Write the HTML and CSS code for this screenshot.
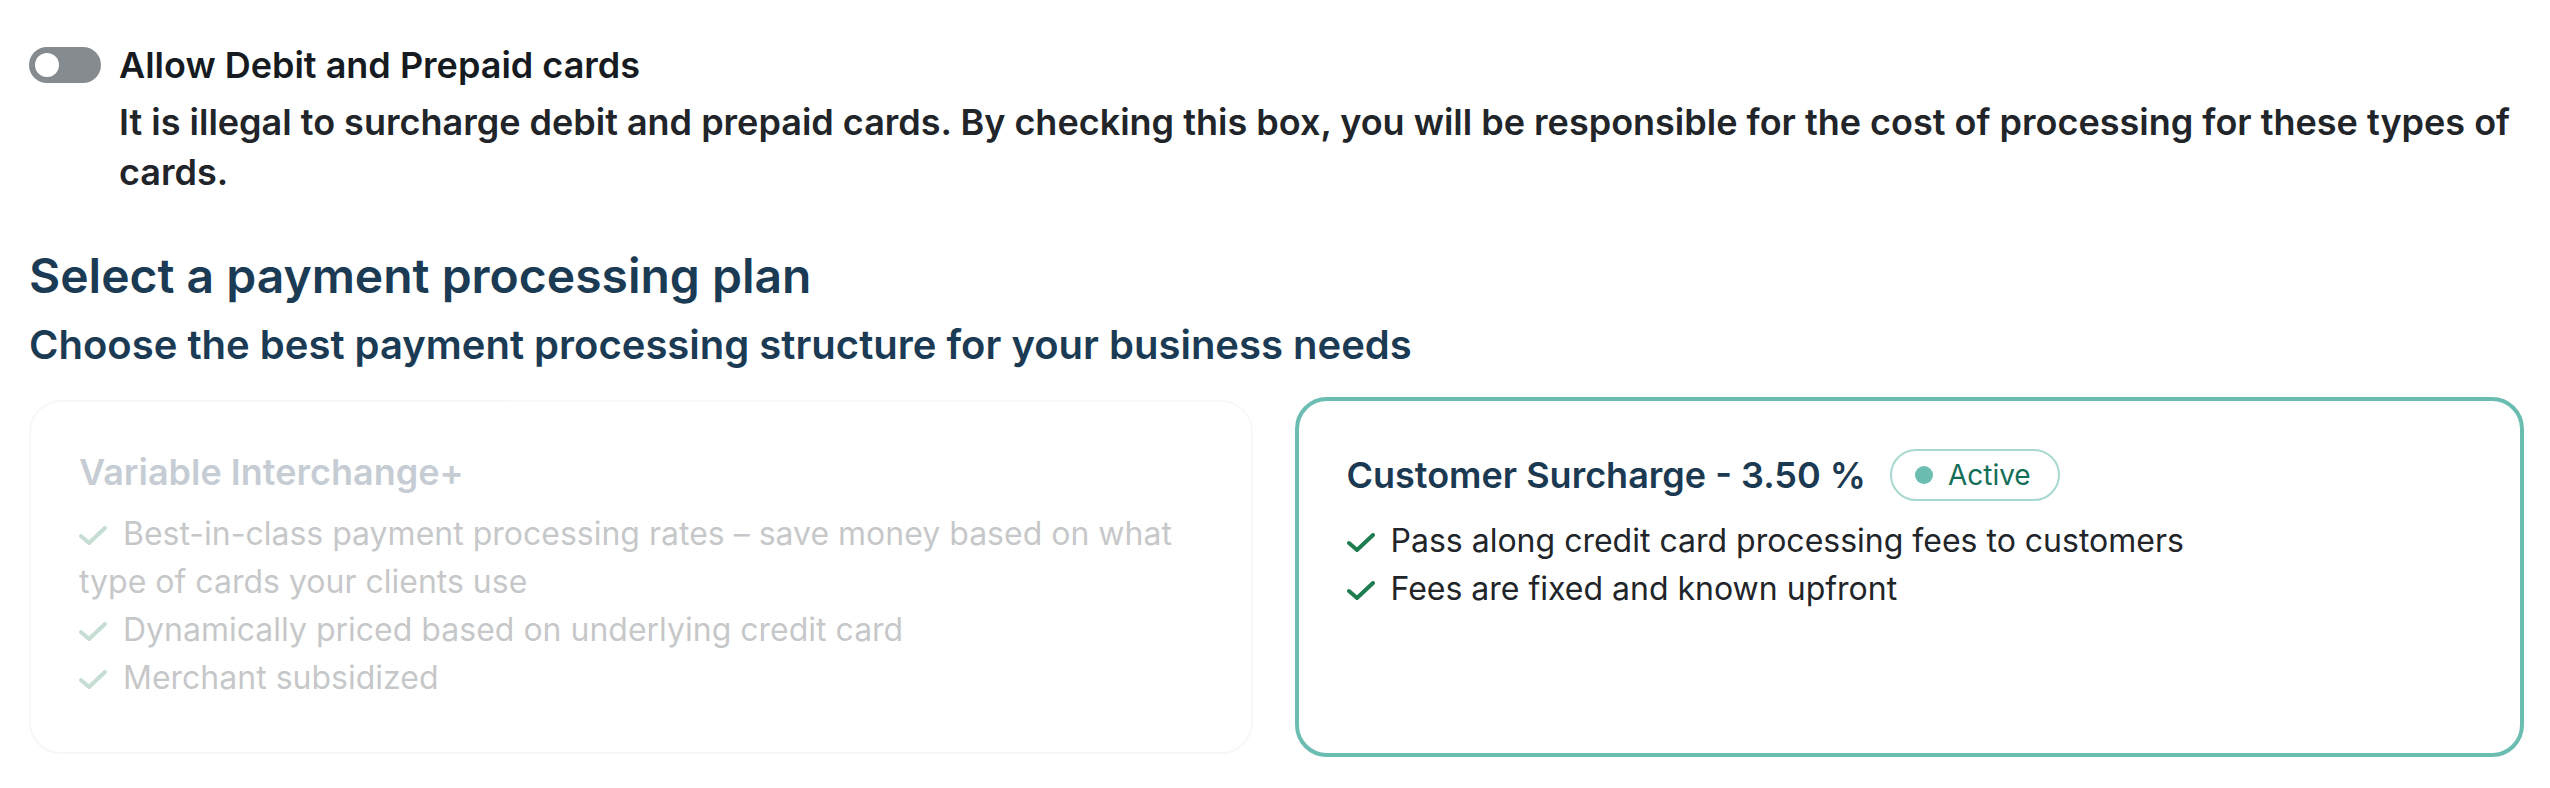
FILE: index.html
```html
<!DOCTYPE html>
<html lang="en">
<head>
    <meta charset="UTF-8">
    <meta name="viewport" content="width=device-width, initial-scale=1.0">
    <title>Payment Processing Plan</title>
    <link rel="stylesheet" href="styles.css">
</head>
<body>
    <div class="page">
        <div class="toggle-row">
            <div class="toggle"><span class="knob"></span></div>
            <div class="toggle-text">
                <p class="toggle-title">Allow Debit and Prepaid cards</p>
                <p class="toggle-desc">It is illegal to surcharge debit and prepaid cards. By checking this box, you will be responsible for the cost of processing for these types of cards.</p>
            </div>
        </div>

        <h1>Select a payment processing plan</h1>
        <h2>Choose the best payment processing structure for your business needs</h2>

        <div class="plans">
            <div class="plan disabled">
                <div class="plan-head">
                    <span class="plan-title">Variable Interchange+</span>
                </div>
                <ul class="features">
                    <li><svg class="check" viewBox="0 0 28 20"><path d="M2 10 L10 17 L26 2"/></svg>Best-in-class payment processing rates – save money based on what type of cards your clients use</li>
                    <li><svg class="check" viewBox="0 0 28 20"><path d="M2 10 L10 17 L26 2"/></svg>Dynamically priced based on underlying credit card</li>
                    <li><svg class="check" viewBox="0 0 28 20"><path d="M2 10 L10 17 L26 2"/></svg>Merchant subsidized</li>
                </ul>
            </div>
            <div class="plan active">
                <div class="plan-head">
                    <span class="plan-title">Customer Surcharge - 3.50 %</span>
                    <span class="badge"><span class="dot"></span>Active</span>
                </div>
                <ul class="features">
                    <li><svg class="check" viewBox="0 0 28 20"><path d="M2 10 L10 17 L26 2"/></svg>Pass along credit card processing fees to customers</li>
                    <li><svg class="check" viewBox="0 0 28 20"><path d="M2 10 L10 17 L26 2"/></svg>Fees are fixed and known upfront</li>
                </ul>
            </div>
        </div>
    </div>
</body>
</html>
```

FILE: styles.css
```css
body {
    margin: 0;
    font-family: Inter, "Noto Sans", sans-serif;
    color: #161b21;
    background: #fff;
}
.page {
    padding: 41px 29px 29px;
}
p {
    margin: 0;
}
.toggle-row {
    display: flex;
    align-items: flex-start;
    gap: 18px;
}
.toggle {
    flex: none;
    width: 72px;
    height: 36px;
    margin-top: 6px;
    border-radius: 18px;
    background-color: #868b90;
    display: flex;
    align-items: center;
    padding: 0 6px;
    box-sizing: border-box;
}
.knob {
    width: 24px;
    height: 24px;
    border-radius: 50%;
    background: #fff;
}
.toggle-title {
    font-size: 36px;
    font-weight: 600;
    line-height: 48px;
    margin-bottom: 8px;
}
.toggle-desc {
    font-size: 36px;
    font-weight: 600;
    line-height: 50px;
    color: #212529;
}
h1 {
    margin: 50px 0 0;
    font-size: 48px;
    font-weight: 600;
    line-height: 58px;
    color: #1b3b54;
}
h2 {
    margin: 14px 0 0;
    font-size: 40px;
    font-weight: 600;
    line-height: 52px;
    color: #1b3b54;
}
.plans {
    display: grid;
    grid-template-columns: 1fr 1fr;
    gap: 45px;
    margin-top: 29px;
}
.plan {
    border-radius: 32px;
    padding: 48px 48px 50px;
}
.plan.disabled {
    border: 2px solid #e2e2e2;
    opacity: 0.25;
}
.plan.active {
    border: 4px solid #6bbdb2;
    margin: -3px -3px;
}
.plan-head {
    display: flex;
    align-items: center;
    gap: 24px;
    min-height: 44px;
}
.plan-title {
    font-size: 36px;
    font-weight: 600;
    color: #1b3a52;
}
.badge {
    display: inline-flex;
    align-items: center;
    gap: 15px;
    height: 48px;
    padding: 0 27px 0 23px;
    border: 2px solid #a8d8d0;
    border-radius: 26px;
    font-size: 28px;
    color: #136e58;
}
.dot {
    width: 18px;
    height: 18px;
    border-radius: 50%;
    background: #6bbdb2;
}
.features {
    list-style: none;
    margin: 16px 0 0;
    padding: 0;
}
.features li {
    font-size: 32px;
    line-height: 48px;
    color: #212529;
}
.check {
    width: 28px;
    height: 20px;
    margin-right: 16px;
    vertical-align: -1px;
    fill: none;
    stroke: #1e7d50;
    stroke-width: 4;
    stroke-linecap: round;
    stroke-linejoin: round;
}
```
